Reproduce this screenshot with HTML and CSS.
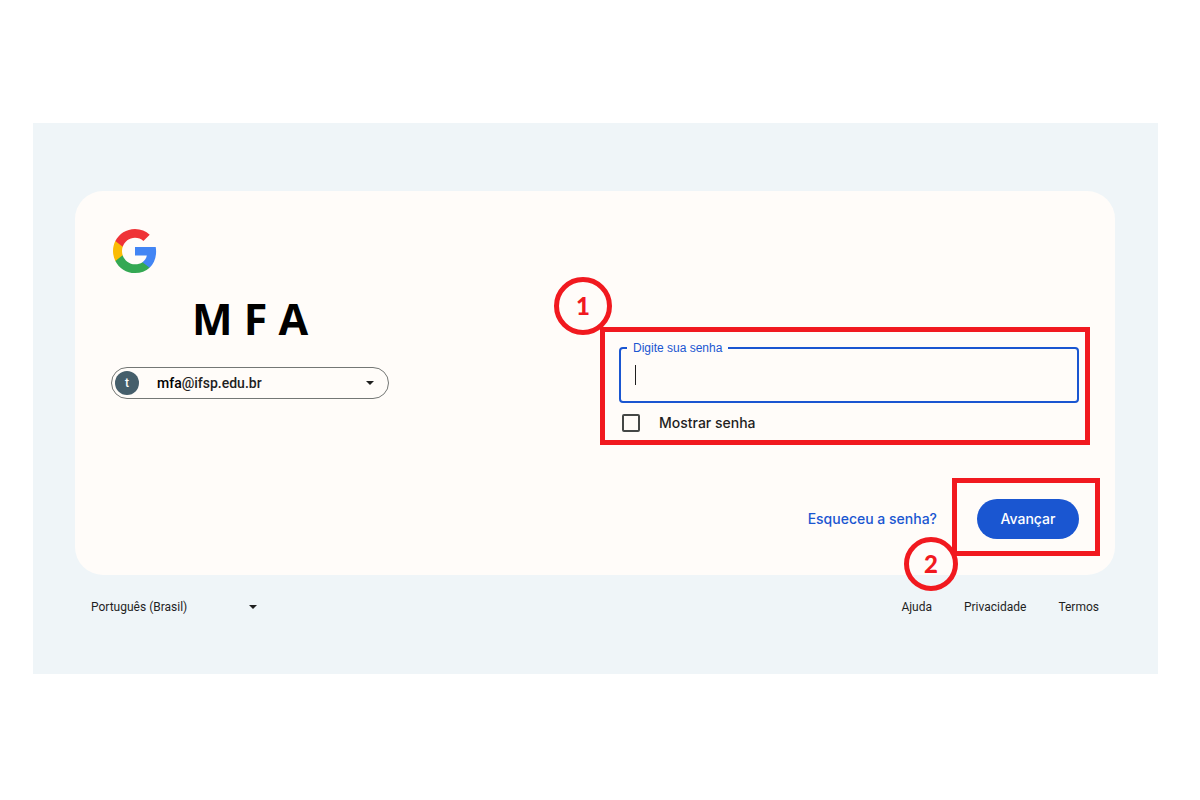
FILE: index.html
```html
<!DOCTYPE html>
<html lang="pt-BR">
  <head>
    <title>MFA</title>
    <meta charset="utf-8"/>
    <link rel="stylesheet" href="styles.css">
  </head>
  <body>
    <div class="screen">
      <main class="card">
        <section class="account">
          <svg class="logo" viewBox="0 0 48 48" role="img" aria-label="Google">
            <path fill="#4285F4" d="M45.12 24.5c0-1.56-.14-3.06-.4-4.5H24v8.51h11.84c-.51 2.75-2.06 5.08-4.39 6.64v5.52h7.11c4.16-3.83 6.56-9.47 6.56-16.17z"/>
            <path fill="#34A853" d="M24 46c5.94 0 10.92-1.97 14.56-5.33l-7.11-5.52c-1.97 1.32-4.49 2.1-7.45 2.1-5.73 0-10.58-3.87-12.31-9.07H4.34v5.7C7.96 41.07 15.4 46 24 46z"/>
            <path fill="#FBBC05" d="M11.69 28.18C11.25 26.86 11 25.45 11 24s.25-2.86.69-4.18v-5.7H4.34C2.85 17.09 2 20.45 2 24s.85 6.91 2.34 9.88l7.35-5.7z"/>
            <path fill="#EF3337" d="M24 10.75c3.23 0 6.13 1.11 8.41 3.29l6.31-6.31C34.91 4.18 29.93 2 24 2 15.4 2 7.96 6.93 4.34 14.12l7.35 5.7c1.73-5.2 6.58-9.07 12.31-9.07z"/>
          </svg>
          <h1>M F A</h1>
          <button class="chip" type="button">
            <span class="avatar">t</span>
            <span class="email"><span class="user">mfa</span>@ifsp.edu.br</span>
            <svg class="arrow" viewBox="0 0 10 5"><path d="M0 0h10L5 5z"/></svg>
          </button>
        </section>

        <form class="login">
          <div class="password">
            <div class="field">
              <input id="senha" type="password">
              <label for="senha">Digite sua senha</label>
              <span class="caret"></span>
            </div>
            <div class="show">
              <input id="mostrar" type="checkbox">
              <label for="mostrar">Mostrar senha</label>
            </div>
            <div class="mark mark-password"><span class="step step-one">1</span></div>
          </div>
          <div class="actions">
            <a href="#">Esqueceu a senha?</a>
            <div class="next">
              <button type="button">Avançar</button>
              <div class="mark mark-next"><span class="step step-two">2</span></div>
            </div>
          </div>
        </form>
      </main>

      <footer class="footer">
        <div class="language">
          <select aria-label="Idioma">
            <option>Português (Brasil)</option>
          </select>
          <svg class="arrow" viewBox="0 0 10 5"><path d="M0 0h10L5 5z"/></svg>
        </div>
        <nav class="links">
          <a href="#">Ajuda</a>
          <a href="#">Privacidade</a>
          <a href="#">Termos</a>
        </nav>
      </footer>
    </div>
  </body>
</html>
```
FILE: styles.css
```css
* { box-sizing: border-box; }

body {
  margin: 0;
  background: #fff;
  color: #1f1f1f;
  font: 14px/20px Inter, sans-serif;
}
h1, button, input, select { margin: 0; font: inherit; color: inherit; }
a { text-decoration: none; color: inherit; }

.screen {
  margin: 123px 42px 0 33px;
  padding: 68px 43px 57px 42px;
  background: #eff5f8;
}

.card {
  display: grid;
  grid-template-columns: 1fr 1fr;
  column-gap: 48px;
  padding: 36px;
  border-radius: 28px;
  background: #fffcf9;
}

/* left column */
.account { max-width: 278px; }
.logo { display: block; width: 48px; height: 48px; }
h1 {
  margin: 18px 0 22px;
  color: #000;
  font: bold 43px/52px "Open Sans", sans-serif;
  text-align: center;
}
.chip {
  display: flex;
  align-items: center;
  width: 100%;
  height: 32px;
  padding: 0 14px 0 3px;
  border: 1px solid #747775;
  border-radius: 16px;
  background: none;
  font-family: Roboto, sans-serif;
  font-weight: 500;
}
.avatar {
  width: 24px;
  height: 24px;
  margin-right: 18px;
  border-radius: 50%;
  background: #455e6b;
  color: #fff;
  font-size: 12px;
  line-height: 24px;
}
.user { color: #000; }
.arrow { width: 8px; height: 4px; margin-left: auto; fill: #1f1f1f; }

/* right column */
.login { padding-top: 120px; }
.password, .field, .next { position: relative; }
.field input {
  display: block;
  width: 100%;
  height: 56px;
  padding: 0 14px;
  border: 2px solid #1a56d1;
  border-radius: 4px;
  outline: none;
  background: none;
}
.field label {
  position: absolute;
  top: -7px;
  left: 8px;
  padding: 0 6px;
  background: #fffcf9;
  color: #1a56d1;
  font: 12px/16px "Liberation Sans", sans-serif;
}
.caret {
  position: absolute;
  top: 18px;
  left: 16px;
  width: 1px;
  height: 20px;
  background: #1f1f1f;
}
.show {
  display: flex;
  align-items: center;
  gap: 19px;
  padding: 10px 3px 0;
  font-weight: 500;
}
.show input {
  appearance: none;
  width: 18px;
  height: 18px;
  border: 2px solid #444746;
  border-radius: 2px;
}
.actions {
  display: flex;
  justify-content: flex-end;
  align-items: center;
  gap: 40px;
  margin-top: 66px;
  color: #1a56d1;
  font-weight: 500;
}
.next button {
  display: block;
  height: 40px;
  width: 102px;
  padding: 0;
  border: 0;
  border-radius: 20px;
  background: #1a56d1;
  color: #fff;
}

/* red step markers */
.mark {
  position: absolute;
  border: 5px solid #f1191f;
  pointer-events: none;
}
.mark-password { inset: -20px -11px -12px -19px; }
.mark-next { inset: -21px -21px -17px -25px; }
.step {
  position: absolute;
  display: flex;
  align-items: center;
  justify-content: center;
  border: 5px solid #f1191f;
  border-radius: 50%;
  color: #f1191f;
  font: 900 24px/28px Lato, sans-serif;
}
.step-one { top: -55px; left: -51px; width: 58px; height: 58px; }
.step-two { top: 54px; left: -53px; width: 54px; height: 54px; }

.footer {
  display: flex;
  justify-content: space-between;
  align-items: center;
  padding: 22px 16px 0;
  font-family: Roboto, sans-serif;
  font-size: 12px;
}
.language { display: flex; align-items: center; width: 166px; }
.language select {
  appearance: none;
  padding: 0;
  border: 0;
  background: none;
}
.links { display: flex; gap: 32px; }
```
